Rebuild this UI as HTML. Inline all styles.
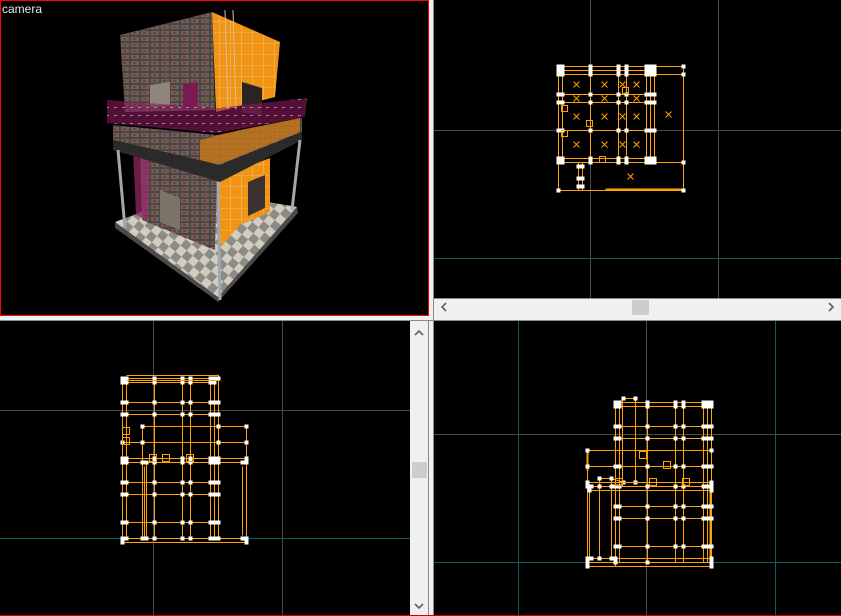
<!DOCTYPE html>
<html><head><meta charset="utf-8"><style>
html,body{margin:0;padding:0;background:#f0f0f0;width:841px;height:616px;overflow:hidden}
svg{display:block}
</style></head><body>
<svg width="841" height="616" viewBox="0 0 841 616" xmlns="http://www.w3.org/2000/svg" font-family="Liberation Sans, sans-serif">
<defs>
<marker id="n" markerWidth="4" markerHeight="4" refX="2" refY="2" markerUnits="userSpaceOnUse"><rect width="4" height="4" fill="#fff"/></marker>
<pattern id="chk" width="16" height="16" patternUnits="userSpaceOnUse" patternTransform="rotate(40)"><rect width="16" height="16" fill="#8e8a84"/><rect width="8" height="8" fill="#d2cdc2"/><rect x="8" y="8" width="8" height="8" fill="#d2cdc2"/></pattern>
<pattern id="brick" width="10" height="6" patternUnits="userSpaceOnUse"><rect width="10" height="6" fill="#4e4442"/><rect x="1" y="1" width="8" height="4" fill="#6c605c"/><rect x="3" y="2" width="3" height="2" fill="#7a3e38"/></pattern>
<pattern id="org" width="11" height="11" patternUnits="userSpaceOnUse"><rect width="11" height="11" fill="#ef9414"/><path d="M0 10.5H11M10.5 0V11" stroke="#f6b868" stroke-width="0.6"/></pattern>
<pattern id="mag" width="8" height="8" patternUnits="userSpaceOnUse"><rect width="8" height="8" fill="#8a1a5a" fill-opacity="0.8"/><rect x="2" y="3" width="3" height="1" fill="#e0a0c8"/></pattern>
</defs>

<rect x="0" y="0" width="429" height="316" fill="#000"/>
<rect x="434" y="0" width="407" height="299" fill="#000"/>
<rect x="0" y="321" width="410" height="295" fill="#000"/>
<rect x="434" y="321" width="407" height="295" fill="#000"/>
<rect x="433" y="0" width="1" height="616" fill="#8a8a8a"/>
<rect x="0" y="320" width="841" height="1" fill="#8a8a8a"/>
<rect x="428" y="321" width="1" height="295" fill="#8a8a8a"/>
<rect x="434" y="298" width="407" height="1" fill="#8a8a8a"/>
<rect x="0.5" y="0.5" width="428" height="315" fill="none" stroke="#ff0000"/>
<text x="2" y="13" fill="#e8e8e8" font-size="12">camera</text>

<!-- building -->
<polygon points="115,223 200,190 297,207 298,213 218,302 213,298 115,228" fill="#4a4a4a"/>
<polygon points="115,222 200,190 297,207 218,297" fill="url(#chk)"/>
<polygon points="140,148 217,178 215,250 142,220" fill="url(#brick)"/>
<polygon points="217,178 270,158 270,212 240,225 218,250" fill="url(#org)"/>
<polygon points="160,190 180,198 180,230 160,222" fill="#7c7468"/>
<polygon points="248,182 265,175 265,208 248,216" fill="#3a3230"/>
<polygon points="133,150 150,156 148,220 136,215" fill="#9a2a6a" fill-opacity="0.7"/>
<polygon points="120,35 212,12 215,110 125,112" fill="url(#brick)"/>
<polygon points="212,12 280,42 275,97 216,112" fill="url(#org)"/>
<polygon points="150,85 170,82 170,105 150,107" fill="#8e8678"/>
<polygon points="183,84 198,82 198,108 183,110" fill="#7a1a50"/>
<polygon points="242,82 262,88 262,115 242,112" fill="#2a2420"/>
<line x1="225" y1="10" x2="228" y2="110" stroke="#e8b8a0" stroke-width="1"/>
<line x1="233" y1="10" x2="236" y2="110" stroke="#e8b8a0" stroke-width="1"/>
<polygon points="113,125 217,135 302,118 302,132 220,165 113,140" fill="url(#brick)"/>
<polygon points="200,140 240,130 300,118 300,132 218,165 200,160" fill="#c87818" fill-opacity="0.8"/>
<polygon points="113,140 220,165 302,132 302,140 220,182 113,150" fill="#2a2a2a"/>
<polygon points="107,100 217,108 307,98 305,117 217,133 107,123" fill="url(#mag)" fill-opacity="0.75"/>
<line x1="118" y1="150" x2="125" y2="228" stroke="#a0a8b0" stroke-width="3"/>
<line x1="218" y1="182" x2="220" y2="300" stroke="#a0a8b0" stroke-width="3"/>
<line x1="300" y1="140" x2="292" y2="210" stroke="#a0a8b0" stroke-width="3"/>

<g stroke-width="1" shape-rendering="crispEdges">
<line x1="590.5" y1="0" x2="590.5" y2="298" stroke="#4a4a4a"/>
<line x1="718.5" y1="0" x2="718.5" y2="298" stroke="#4a4a4a"/>
<line x1="434" y1="130.5" x2="841" y2="130.5" stroke="#4a4a4a"/>
<line x1="434" y1="258.5" x2="841" y2="258.5" stroke="#0a5e5e"/>
<line x1="153.5" y1="321" x2="153.5" y2="616" stroke="#4a4a4a"/>
<line x1="282.5" y1="321" x2="282.5" y2="616" stroke="#4a4a4a"/>
<line x1="0" y1="410.5" x2="410" y2="410.5" stroke="#4a4a4a"/>
<line x1="0" y1="538.5" x2="410" y2="538.5" stroke="#0a5e5e"/>
<line x1="518.5" y1="321" x2="518.5" y2="616" stroke="#0a5e5e"/>
<line x1="646.5" y1="321" x2="646.5" y2="616" stroke="#4a4a4a"/>
<line x1="775.5" y1="321" x2="775.5" y2="616" stroke="#0a5e5e"/>
<line x1="434" y1="434.5" x2="841" y2="434.5" stroke="#4a4a4a"/>
<line x1="434" y1="562.5" x2="841" y2="562.5" stroke="#0a5e5e"/>
</g>

<!-- top-right plan -->
<g stroke="#ffa200" fill="none" stroke-width="1" transform="translate(0.5,0.5)">
<path d="M558 66V190M562 66V162M590 66V162M618 66V162M626 66V162M646 66V162M650 66V162M654 66V162M683 66V190M578 162V190M582 162V190"/>
<path d="M605 189H683" stroke-width="2"/>
<g marker-start="url(#n)" marker-mid="url(#n)" marker-end="url(#n)">
<polyline points="558,66 562,66 590,66 618,66 626,66 646,66 650,66 654,66 683,66"/>
<polyline points="558,70 562,70 590,70 618,70 626,70 646,70 650,70 654,70"/>
<polyline points="558,74 562,74 590,74 618,74 626,74 646,74 650,74 654,74 683,74"/>
<polyline points="558,94 562,94 590,94 618,94 626,94 646,94 650,94 654,94"/>
<polyline points="558,102 562,102 590,102 618,102 626,102 646,102 650,102 654,102"/>
<polyline points="558,130 562,130 590,130 618,130 626,130 646,130 650,130 654,130"/>
<polyline points="558,158 562,158 590,158 618,158 626,158 646,158 650,158 654,158"/>
<polyline points="558,162 562,162 590,162 618,162 626,162 646,162 650,162 654,162 683,162"/>
<polyline points="558,190 683,190"/>
<polyline points="578,166 582,166"/>
<polyline points="578,178 582,178"/>
<polyline points="578,186 582,186"/>
</g>
<rect x="622" y="87" width="6" height="6"/><rect x="561" y="105" width="6" height="6"/><rect x="586" y="120" width="6" height="6"/><rect x="561" y="130" width="6" height="6"/><rect x="599" y="156" width="6" height="6"/>
<path d="M573 81l6 6m0-6l-6 6M601 81l6 6m0-6l-6 6M619 81l6 6m0-6l-6 6M633 81l6 6m0-6l-6 6M573 95l6 6m0-6l-6 6M601 95l6 6m0-6l-6 6M633 95l6 6m0-6l-6 6M573 113l6 6m0-6l-6 6M601 113l6 6m0-6l-6 6M619 113l6 6m0-6l-6 6M633 113l6 6m0-6l-6 6M665 111l6 6m0-6l-6 6M573 141l6 6m0-6l-6 6M601 141l6 6m0-6l-6 6M619 141l6 6m0-6l-6 6M633 141l6 6m0-6l-6 6M627 173l6 6m0-6l-6 6"/>
</g>

<!-- bottom-left plan -->
<g stroke="#ffa200" fill="none" stroke-width="1" transform="translate(0.5,0.5)">
<path d="M122 378V540M126 378V538M154 378V538M182 378V538M190 378V538M210 378V538M214 378V538M218 374V462M142 426V538M146 462V538M246 426V540M242 466V535M218 462V538M144 466V536"/>
<g marker-start="url(#n)" marker-mid="url(#n)" marker-end="url(#n)">
<polyline points="122,378 126,378 154,378 182,378 190,378 210,378 214,378 218,378"/>
<polyline points="122,382 126,382 154,382 182,382 190,382 210,382 214,382"/>
<polyline points="122,402 126,402 154,402 182,402 190,402 210,402 214,402 218,402"/>
<polyline points="122,414 126,414 154,414 182,414 190,414 210,414 214,414 218,414"/>
<polyline points="142,426 218,426 246,426"/>
<polyline points="122,442 142,442 218,442 246,442"/>
<polyline points="122,458 126,458 154,458 182,458 190,458 210,458 214,458 218,458 246,458"/>
<polyline points="122,462 126,462 142,462 146,462 154,462 182,462 190,462 210,462 214,462 218,462 242,462 246,462"/>
<polyline points="122,482 126,482 154,482 182,482 190,482 210,482 214,482 218,482"/>
<polyline points="122,494 126,494 154,494 182,494 190,494 210,494 214,494 218,494"/>
<polyline points="122,522 126,522 154,522 182,522 190,522 210,522 214,522 218,522"/>
<polyline points="122,538 126,538 142,538 146,538 154,538 182,538 190,538 210,538 214,538 218,538 242,538 246,538"/>
<polyline points="122,542 246,542"/>
</g>
<path d="M126 375H218M126 380H218"/>
<rect x="122" y="427" width="7" height="7"/><rect x="122" y="437" width="7" height="7"/><rect x="149" y="454" width="7" height="7"/><rect x="162" y="454" width="7" height="7"/><rect x="186" y="454" width="7" height="7"/>
</g>

<!-- bottom-right plan -->
<g stroke="#ffa200" fill="none" stroke-width="1" transform="translate(0.5,0.5)">
<path d="M615 402V566M619 402V562M622 398V482M635 398V482M647 402V562M675 402V562M683 402V562M703 402V562M707 402V562M711 402V566M587 450V566M589 490V558M599 480V558M611 480V558"/>
<path d="M587 452V470M710 490V562" stroke-width="2"/>
<g marker-start="url(#n)" marker-mid="url(#n)" marker-end="url(#n)">
<polyline points="623,398 635,398"/>
<polyline points="615,402 619,402 647,402 675,402 683,402 703,402 707,402 711,402"/>
<polyline points="615,406 619,406 647,406 675,406 683,406 703,406 707,406 711,406"/>
<polyline points="615,426 619,426 647,426 675,426 683,426 703,426 707,426 711,426"/>
<polyline points="615,438 619,438 647,438 675,438 683,438 703,438 707,438 711,438"/>
<polyline points="587,450 711,450"/>
<polyline points="587,466 615,466 619,466 647,466 675,466 683,466 703,466 707,466 711,466"/>
<polyline points="599,478 611,478 623,482 635,482"/>
<polyline points="587,482 711,482"/>
<polyline points="587,486 591,486 599,486 611,486 615,486 619,486 647,486 675,486 683,486 703,486 707,486 711,486"/>
<polyline points="589,490 711,490"/>
<polyline points="615,506 619,506 647,506 675,506 683,506 703,506 707,506 711,506"/>
<polyline points="615,518 619,518 647,518 675,518 683,518 703,518 707,518 711,518"/>
<polyline points="615,546 619,546 647,546 675,546 683,546 703,546 707,546 711,546"/>
<polyline points="587,558 591,558 599,558 611,558 615,558 711,558"/>
<polyline points="587,562 615,562 647,562 711,562"/>
<polyline points="587,566 711,566"/>
</g>
<rect x="639" y="451" width="7" height="7"/><rect x="663" y="461" width="7" height="7"/><rect x="615" y="478" width="7" height="7"/><rect x="649" y="478" width="7" height="7"/><rect x="682" y="478" width="7" height="7"/>
</g>

<rect x="434" y="299" width="407" height="17" fill="#f0f0f0"/>
<path d="M446 303l-4 4 4 4" stroke="#606060" stroke-width="1.6" fill="none"/>
<path d="M829 303l4 4-4 4" stroke="#606060" stroke-width="1.6" fill="none"/>
<rect x="632" y="300" width="17" height="15" fill="#cdcdcd"/>
<rect x="410" y="321" width="18" height="295" fill="#f0f0f0"/>
<path d="M415 335l4-4 4 4" stroke="#606060" stroke-width="1.6" fill="none"/>
<path d="M415 604l4 4 4-4" stroke="#606060" stroke-width="1.6" fill="none"/>
<rect x="412" y="462" width="15" height="16" fill="#cdcdcd"/>
<rect x="0" y="615" width="841" height="1" fill="#d00000"/>
</svg>
</body></html>
